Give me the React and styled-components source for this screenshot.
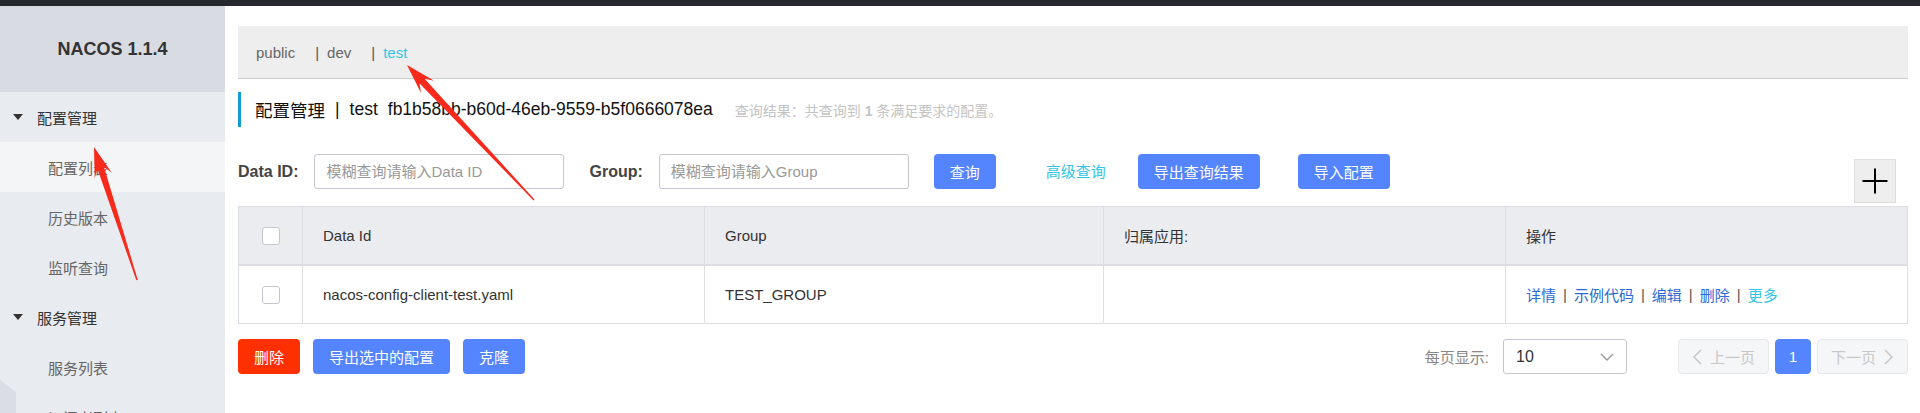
import React from 'react';
import styled, { createGlobalStyle } from 'styled-components';

const GlobalStyle = createGlobalStyle`
  html, body { margin: 0; padding: 0; background: #fff; overflow: hidden; }
  body {
    font-family: "Liberation Sans", "Noto Sans CJK SC", sans-serif;
    font-size: 15px;
    color: #333;
  }
  * { box-sizing: border-box; }
`;

const Page = styled.div`
  position: relative;
  width: 1920px;
  height: 413px;
  overflow: hidden;
  display: flex;
  flex-direction: column;
`;

const TopBar = styled.div`
  flex: none;
  height: 6px;
  background: #25282c;
`;

const Body = styled.div`
  flex: 1;
  display: flex;
  min-height: 0;
`;

const Sidebar = styled.aside`
  position: relative;
  flex: none;
  width: 225px;
  background: #e8ebef;
  overflow: hidden;
  &::after {
    content: '';
    position: absolute;
    left: 0;
    top: 374px;
    width: 16px;
    height: 40px;
    background: #dadde3;
    clip-path: polygon(0 0, 100% 30%, 100% 100%, 0 100%);
  }
`;

const Brand = styled.div`
  height: 86px;
  display: flex;
  align-items: center;
  justify-content: center;
  background: #d8dce2;
  font-size: 18px;
  font-weight: bold;
  color: #333;
`;

const MenuGroup = styled.div`
  height: 50px;
  display: flex;
  align-items: center;
  gap: 14px;
  padding-left: 13px;
  color: #333;
  font-size: 15px;
`;

const Caret = styled.span`
  width: 0;
  height: 0;
  border-left: 5.5px solid transparent;
  border-right: 5.5px solid transparent;
  border-top: 6px solid #333;
`;

const MenuItem = styled.div`
  height: 50px;
  display: flex;
  align-items: center;
  padding-left: 48px;
  color: #666;
  font-size: 15px;
  background: ${(p) => (p.$active ? '#f4f5f7' : 'transparent')};
`;

const Main = styled.main`
  flex: 1;
  min-width: 0;
  padding: 20px 12px 0 13px;
  display: flex;
  flex-direction: column;
`;

const NsBar = styled.div`
  height: 53px;
  background: #eee;
  border-bottom: 1px solid #ccc;
  display: flex;
  align-items: center;
  padding-left: 18px;
  font-size: 15px;
`;

const NsItem = styled.span`
  margin-right: 20px;
  color: ${(p) => (p.$current ? '#33c5e6' : '#666')};
`;

const NsSep = styled.span`
  margin-right: 8px;
  color: #555;
`;

const TitleRow = styled.div`
  margin-top: 13px;
  height: 35px;
  border-left: 3px solid #129ad6;
  padding-left: 14px;
  display: flex;
  align-items: center;
  font-size: 17.5px;
  color: #111;
`;

const TitleSep = styled.span`
  margin: 0 10px;
`;

const TitleId = styled.span`
  margin-left: 10px;
`;

const ResultInfo = styled.span`
  margin-left: 22px;
  font-size: 14px;
  color: #c3c3c3;
  b { font-weight: bold; }
`;

const SearchRow = styled.div`
  margin-top: 27px;
  display: flex;
  align-items: flex-start;
`;

const FormItem = styled.div`
  display: flex;
  align-items: center;
  gap: 16px;
  height: 35px;
  margin-right: ${(p) => p.$mr ?? 25}px;
`;

const Label = styled.label`
  font-size: 16px;
  font-weight: bold;
  color: #444;
`;

const Input = styled.input`
  width: 250px;
  height: 35px;
  border: 1px solid #c4c6cf;
  border-radius: 3px;
  padding: 0 11px;
  font-family: inherit;
  font-size: 15px;
  color: #333;
  outline: none;
  &::placeholder { color: #999; }
`;

const Button = styled.button`
  height: 35px;
  padding: 0 16px;
  border: none;
  border-radius: 4px;
  background: ${(p) => (p.$danger ? '#ff3000' : '#5584ff')};
  color: #fff;
  font-family: inherit;
  font-size: 15px;
  cursor: pointer;
`;

const AdvLink = styled.a`
  margin-left: 25px;
  color: #33c5e6;
  font-size: 15px;
  line-height: 35px;
`;

const PlusButton = styled.button`
  margin-left: auto;
  margin-top: 5px;
  margin-right: 12px;
  width: 42px;
  height: 44px;
  padding: 0;
  border: 1px solid #ddd;
  background: #eee;
  display: flex;
  align-items: center;
  justify-content: center;
`;

const Table = styled.div`
  margin-top: 3px;
  border: 1px solid #dcdee3;
  display: grid;
  grid-template-columns: 64px 402px 399px 402px 1fr;
`;

const Cell = styled.div`
  height: ${(p) => (p.$head ? 59 : 57)}px;
  display: flex;
  align-items: center;
  justify-content: ${(p) => (p.$center ? 'center' : 'flex-start')};
  padding-left: ${(p) => (p.$center ? 0 : 20)}px;
  background: ${(p) => (p.$head ? '#ebecf0' : '#fff')};
  border-right: ${(p) => (p.$last ? 'none' : '1px solid #dcdee3')};
  border-bottom: ${(p) => (p.$head ? '2px solid #dcdee3' : 'none')};
  font-size: 15px;
  color: #333;
`;

const Checkbox = styled.span`
  width: 18px;
  height: 18px;
  border: 1px solid #c4c6cf;
  border-radius: 3px;
  background: #fff;
`;

const ActionLink = styled.a`
  color: ${(p) => (p.$more ? '#33c5e6' : '#2a6ad6')};
`;

const ActionSep = styled.span`
  margin: 0 7px;
  color: #555;
`;

const BottomRow = styled.div`
  margin-top: 15px;
  display: flex;
  align-items: center;
  gap: 13px;
`;

const Pager = styled.div`
  margin-left: auto;
  display: flex;
  align-items: center;
`;

const PageSizeLabel = styled.span`
  color: #888;
  font-size: 15px;
  margin-right: 14px;
`;

const Select = styled.div`
  width: 124px;
  height: 35px;
  border: 1px solid #c4c6cf;
  border-radius: 3px;
  display: flex;
  align-items: center;
  justify-content: space-between;
  padding: 0 12px 0 12px;
  font-size: 16px;
  color: #333;
  margin-right: 51px;
`;

const PageBtn = styled.span`
  height: 35px;
  width: ${(p) => p.$w}px;
  margin-left: ${(p) => p.$ml ?? 0}px;
  display: flex;
  align-items: center;
  justify-content: center;
  gap: 6px;
  border-radius: 4px;
  font-size: 15px;
  border: 1px solid ${(p) => (p.$current ? '#5584ff' : '#e6e7eb')};
  background: ${(p) => (p.$current ? '#5584ff' : '#f5f6f8')};
  color: ${(p) => (p.$current ? '#fff' : '#c8c8c8')};
`;

const Overlay = styled.svg`
  position: absolute;
  left: 0;
  top: 0;
  pointer-events: none;
`;

function arrowPoints(tx, ty, px, py) {
  const dx = px - tx;
  const dy = py - ty;
  const len = Math.hypot(dx, dy);
  const ux = dx / len;
  const uy = dy / len;
  const nx = -uy;
  const ny = ux;
  const headLen = 30;
  const notch = 22;
  const headW = 9;
  const shaftW = 3.4;
  const tailW = 0.7;
  const bx = px - ux * headLen;
  const by = py - uy * headLen;
  const jx = px - ux * notch;
  const jy = py - uy * notch;
  const pts = [
    [px, py],
    [bx + nx * headW, by + ny * headW],
    [jx + nx * shaftW, jy + ny * shaftW],
    [tx + nx * tailW, ty + ny * tailW],
    [tx - nx * tailW, ty - ny * tailW],
    [jx - nx * shaftW, jy - ny * shaftW],
    [bx - nx * headW, by - ny * headW],
  ];
  return pts.map((p) => p.map((v) => v.toFixed(1)).join(',')).join(' ');
}

const Chevron = ({ dir = 'down', color = '#999', w = 14, h = 8 }) => {
  if (dir === 'down') {
    return (
      <svg width={w} height={h} viewBox="0 0 14 8">
        <polyline points="1,1 7,7 13,1" fill="none" stroke={color} strokeWidth="1.4" />
      </svg>
    );
  }
  const pts = dir === 'left' ? '9,1 2,8 9,15' : '3,1 10,8 3,15';
  return (
    <svg width="12" height="16" viewBox="0 0 12 16">
      <polyline points={pts} fill="none" stroke={color} strokeWidth="1.5" />
    </svg>
  );
};

const actions = ['详情', '示例代码', '编辑', '删除'];

export default function App() {
  return (
    <Page>
      <GlobalStyle />
      <TopBar />
      <Body>
        <Sidebar>
          <Brand>NACOS 1.1.4</Brand>
          <MenuGroup><Caret />配置管理</MenuGroup>
          <MenuItem $active>配置列表</MenuItem>
          <MenuItem>历史版本</MenuItem>
          <MenuItem>监听查询</MenuItem>
          <MenuGroup><Caret />服务管理</MenuGroup>
          <MenuItem>服务列表</MenuItem>
          <MenuItem>订阅者列表</MenuItem>
        </Sidebar>
        <Main>
          <NsBar>
            <NsItem>public</NsItem>
            <NsItem><NsSep>|</NsSep>dev</NsItem>
            <NsItem $current><NsSep>|</NsSep>test</NsItem>
          </NsBar>
          <TitleRow>
            <span>配置管理</span>
            <TitleSep>|</TitleSep>
            <span>test</span>
            <TitleId>fb1b58bb-b60d-46eb-9559-b5f0666078ea</TitleId>
            <ResultInfo>查询结果：共查询到 <b>1</b> 条满足要求的配置。</ResultInfo>
          </TitleRow>
          <SearchRow>
            <FormItem>
              <Label>Data ID:</Label>
              <Input placeholder="模糊查询请输入Data ID" />
            </FormItem>
            <FormItem>
              <Label>Group:</Label>
              <Input placeholder="模糊查询请输入Group" />
            </FormItem>
            <FormItem>
              <Button>查询</Button>
            </FormItem>
            <FormItem $mr={32}>
              <AdvLink>高级查询</AdvLink>
            </FormItem>
            <FormItem $mr={38}>
              <Button>导出查询结果</Button>
            </FormItem>
            <FormItem $mr={0}>
              <Button>导入配置</Button>
            </FormItem>
            <PlusButton aria-label="add">
              <svg width="26" height="26" viewBox="0 0 26 26">
                <line x1="13" y1="0.5" x2="13" y2="25.5" stroke="#000" strokeWidth="2" />
                <line x1="0.5" y1="13" x2="25.5" y2="13" stroke="#000" strokeWidth="2" />
              </svg>
            </PlusButton>
          </SearchRow>
          <Table>
            <Cell $head $center><Checkbox /></Cell>
            <Cell $head>Data Id</Cell>
            <Cell $head>Group</Cell>
            <Cell $head>归属应用:</Cell>
            <Cell $head $last>操作</Cell>
            <Cell $center><Checkbox /></Cell>
            <Cell>nacos-config-client-test.yaml</Cell>
            <Cell>TEST_GROUP</Cell>
            <Cell></Cell>
            <Cell $last>
              {actions.map((a) => (
                <React.Fragment key={a}>
                  <ActionLink>{a}</ActionLink>
                  <ActionSep>|</ActionSep>
                </React.Fragment>
              ))}
              <ActionLink $more>更多</ActionLink>
            </Cell>
          </Table>
          <BottomRow>
            <Button $danger>删除</Button>
            <Button>导出选中的配置</Button>
            <Button>克隆</Button>
            <Pager>
              <PageSizeLabel>每页显示:</PageSizeLabel>
              <Select>
                <span>10</span>
                <Chevron dir="down" />
              </Select>
              <PageBtn $w={91}><Chevron dir="left" color="#c8c8c8" />上一页</PageBtn>
              <PageBtn $w={36} $ml={6} $current>1</PageBtn>
              <PageBtn $w={91} $ml={6}>下一页<Chevron dir="right" color="#c8c8c8" /></PageBtn>
            </Pager>
          </BottomRow>
        </Main>
      </Body>
      <Overlay width="1920" height="413" viewBox="0 0 1920 413">
        <polygon points={arrowPoints(137, 280, 94, 147)} fill="#f72a1c" />
        <polygon points={arrowPoints(534, 200, 407, 65)} fill="#f72a1c" />
      </Overlay>
    </Page>
  );
}
